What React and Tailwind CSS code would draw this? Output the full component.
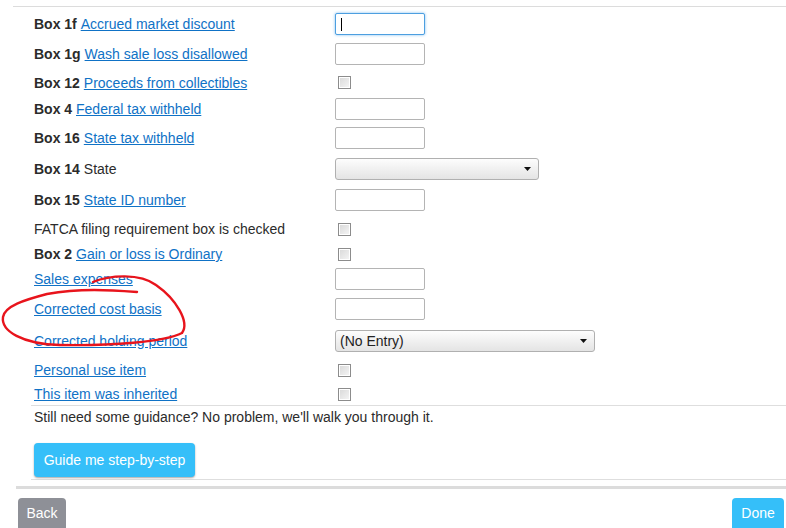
const rows = [
  { box: "Box 1f", label: "Accrued market discount", link: true, ctl: "focus", h: "h-[30px]" },
  { box: "Box 1g", label: "Wash sale loss disallowed", link: true, ctl: "input", h: "h-[30px]" },
  { box: "Box 12", label: "Proceeds from collectibles", link: true, ctl: "check", h: "h-[27px]" },
  { box: "Box 4", label: "Federal tax withheld", link: true, ctl: "input", h: "h-[26px]" },
  { box: "Box 16", label: "State tax withheld", link: true, ctl: "input", h: "h-[31px]" },
  { box: "Box 14", label: "State", link: false, ctl: "state", h: "h-[32px]" },
  { box: "Box 15", label: "State ID number", link: true, ctl: "input", h: "h-[30px]" },
  { box: null, label: "FATCA filing requirement box is checked", link: false, ctl: "check", h: "h-[28px]" },
  { box: "Box 2", label: "Gain or loss is Ordinary", link: true, ctl: "check", h: "h-[22px]" },
  { box: null, label: "Sales expenses", link: true, ctl: "input", h: "h-[28px]" },
  { box: null, label: "Corrected cost basis", link: true, ctl: "input", h: "h-[32px]" },
  { box: null, label: "Corrected holding period", link: true, ctl: "holding", h: "h-[32px]" },
  { box: null, label: "Personal use item", link: true, ctl: "check", h: "h-[26px]" },
  { box: null, label: "This item was inherited", link: true, ctl: "check", h: "h-[22px]" },
];

function TextBox({ focused }) {
  return (
    <div
      className={`relative h-[22px] w-[90px] rounded-[2px] border bg-white ${
        focused
          ? "border-[#4d9fe0] shadow-[0_0_3px_#7fbdf0]"
          : "border-[#b4b4b4]"
      }`}
    >
      {focused && <span className="absolute left-[5px] top-[4px] h-[13px] w-px bg-black" />}
    </div>
  );
}

function Check() {
  return (
    <div className="ml-[3px] h-[13px] w-[13px] border border-[#8c8c8c] bg-gradient-to-br from-[#d8d8d8] to-[#f6f6f6] shadow-[inset_0_0_0_1px_#fff]" />
  );
}

function Select({ width, text }) {
  return (
    <div
      className={`flex h-[22px] ${width} items-center justify-between rounded-[3px] border border-[#b0b0b0] bg-gradient-to-b from-[#fdfdfd] to-[#e4e4e4] pl-[4px] pr-[7px] text-[14px] text-[#222]`}
    >
      <span>{text}</span>
      <svg width="7" height="4" viewBox="0 0 7 4">
        <path d="M0 0h7L3.5 4z" fill="#111" />
      </svg>
    </div>
  );
}

function Control({ kind }) {
  if (kind === "focus") return <TextBox focused />;
  if (kind === "input") return <TextBox />;
  if (kind === "check") return <Check />;
  if (kind === "state") return <Select width="w-[204px]" text="" />;
  return <Select width="w-[260px]" text="(No Entry)" />;
}

export default function App() {
  return (
    <div className="relative h-[528px] w-[786px] overflow-hidden bg-white text-[14px] leading-5 text-[#2b2b2b] font-['Liberation_Sans',Arial,sans-serif]">
      <div className="ml-[13px] mt-[6px] border-t border-[#dcdcdc] pt-[2px]">
        <div className="pl-[21px]">
          {rows.map((r, i) => (
            <div key={i} className={`flex items-center ${r.h}`}>
              <div className="w-[301px]">
                {r.box && <span className="font-bold">{r.box} </span>}
                {r.link ? (
                  <a href="#" className="text-[#0f72c6] underline">
                    {r.label}
                  </a>
                ) : (
                  <span>{r.label}</span>
                )}
              </div>
              <Control kind={r.ctl} />
            </div>
          ))}
        </div>
      </div>

      <div className="ml-[31px] border-t border-[#dedede] pl-[3px] pt-px">
        <p>Still need some guidance? No problem, we'll walk you through it.</p>
        <button className="mt-[16px] h-[34px] w-[161px] rounded-[4px] bg-[#35bff9] text-white shadow-[0_1px_2px_rgba(0,0,0,0.35)]">
          Guide me step-by-step
        </button>
        <div className="ml-[-3px] mt-[2px] border-t border-[#dedede]" />
      </div>

      <div className="ml-[16px] mt-[6px] h-[3px] bg-[#dcdcdc]" />

      <div className="mt-[9px] flex justify-between pl-[18px] pr-[2px]">
        <button className="h-[40px] w-[48px] rounded-t-[4px] bg-[#8e9097] pb-[10px] text-white">
          Back
        </button>
        <button className="h-[40px] w-[52px] rounded-t-[4px] bg-[#35bff9] pb-[10px] text-white">
          Done
        </button>
      </div>

      <svg className="pointer-events-none absolute left-0 top-0" width="786" height="528">
        <path
          d="M93 282 C110 275 140 273 156 285 C176 299 190 322 182 333 C165 342 110 346 60 345 C22 344 1 331 3 317 C5 306 24 300 47 294 C80 288 110 290 137 292"
          fill="none"
          stroke="#e8141c"
          strokeWidth="2.4"
          strokeLinecap="round"
        />
      </svg>
    </div>
  );
}
